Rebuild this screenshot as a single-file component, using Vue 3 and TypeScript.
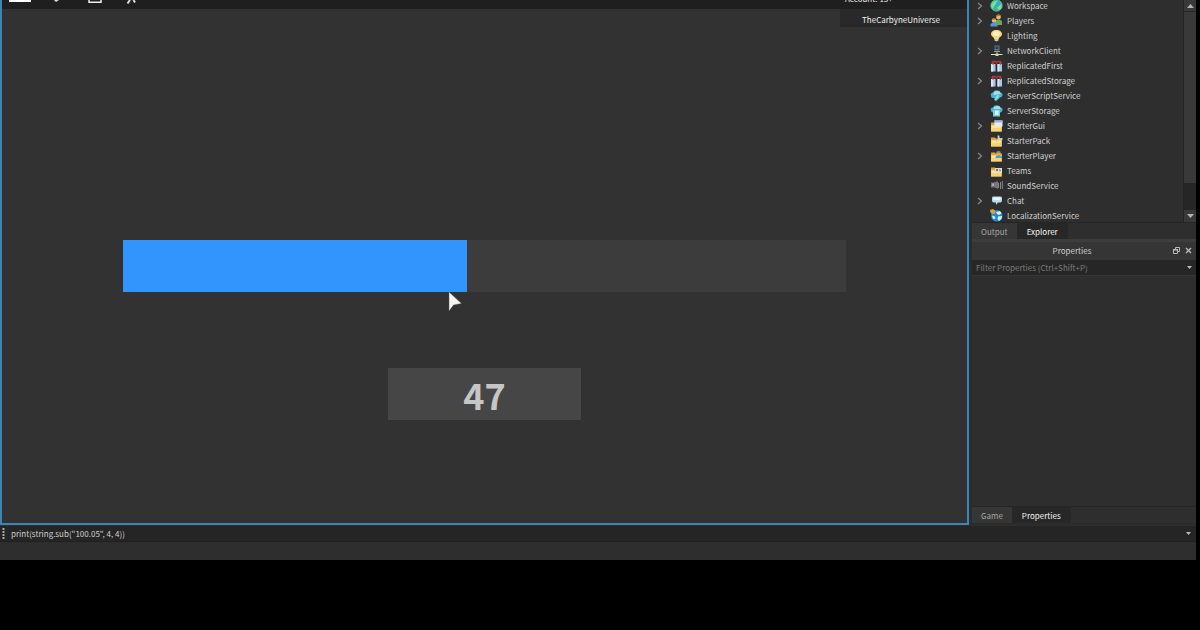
<script setup lang="ts">
import { ref } from 'vue'

interface Service {
  name: string
  icon: string
  expandable?: boolean
}

const services: Service[] = [
  { name: 'Workspace', icon: 'globe', expandable: true },
  { name: 'Players', icon: 'players', expandable: true },
  { name: 'Lighting', icon: 'bulb' },
  { name: 'NetworkClient', icon: 'network', expandable: true },
  { name: 'ReplicatedFirst', icon: 'replicated' },
  { name: 'ReplicatedStorage', icon: 'replicated', expandable: true },
  { name: 'ServerScriptService', icon: 'script' },
  { name: 'ServerStorage', icon: 'storage' },
  { name: 'StarterGui', icon: 'gui', expandable: true },
  { name: 'StarterPack', icon: 'pack' },
  { name: 'StarterPlayer', icon: 'starter', expandable: true },
  { name: 'Teams', icon: 'teams' },
  { name: 'SoundService', icon: 'sound' },
  { name: 'Chat', icon: 'chat', expandable: true },
  { name: 'LocalizationService', icon: 'locale' },
]

const progress = ref(47)
const barFill = ref(47.6)
const filter = ref('')
const command = ref('print(string.sub("100.05", 4, 4))')
</script>

<template>
  <div class="screen">
    <div class="studio">
      <div class="workspace">
        <main class="viewport">
          <header class="topbar">
            <svg class="top-icons" width="150" height="9" viewBox="0 0 150 9" aria-hidden="true">
              <path d="M7 0h22v2H7z" fill="#fff" />
              <path d="M52 0h5l-3 2z" fill="#ddd" />
              <path d="M87 0v2.300h12V0" fill="none" stroke="#eee" stroke-width="1.500" />
              <path d="M125.500 3.500L128 0M131.500 0l1.500 2.500" fill="none" stroke="#ddd" stroke-width="2" />
            </svg>
            <span class="account">Account: 13+</span>
          </header>
          <div class="player">TheCarbyneUniverse</div>
          <section class="stage">
            <div class="bar" role="progressbar" :aria-valuenow="progress" aria-valuemin="0" aria-valuemax="100">
              <div class="fill" :style="{ width: barFill + '%' }">
                <svg class="cursor" width="14" height="21" viewBox="0 0 14 21" aria-hidden="true">
                  <path d="M1 1v19l4.500-6L13.500 12.500z" fill="#f4f4f4" stroke="#555" stroke-width=".4" />
                </svg>
              </div>
            </div>
            <output class="value">{{ progress }}</output>
          </section>
        </main>

        <aside class="side">
          <section class="explorer">
            <ul class="tree">
              <li v-for="s in services" :key="s.name">
                <button v-if="s.expandable" class="expand" type="button" :aria-label="'Expand ' + s.name">
                  <svg width="6" height="8" viewBox="0 0 6 8"><path d="M1 1l3.500 3L1 7" fill="none" stroke="#8a8a8a" stroke-width="1.200" /></svg>
                </button>
                <span v-else class="expand"></span>
                <svg class="icon" width="13" height="13" viewBox="0 0 13 13" aria-hidden="true">
                  <g v-if="s.icon === 'globe'">
                    <circle cx="6.500" cy="6.500" r="5.700" fill="#35b98a" />
                    <path d="M1.500 5Q4 1 8 2L6 4 7 6 4 7 3 10Q0 8 1.500 5M9 4l2.500 1v4L9 11 7 9z" fill="#79dfa0" />
                    <path d="M6 4l3-2 2 3-3 3-3-1z" fill="#39a7ce" />
                    <circle cx="6.500" cy="6.500" r="5.700" fill="none" stroke="#68cba6" stroke-width=".7" />
                  </g>
                  <g v-else-if="s.icon === 'players'">
                    <circle cx="8.500" cy="3" r="2.400" fill="#edbc73" />
                    <path d="M5 10V7q3.500-3 7 0v4H6z" fill="#68a953" />
                    <path d="M6 2q2.500-3 5 0l-2-.3-3 1z" fill="#a66b3b" />
                    <circle cx="4" cy="6.500" r="2.200" fill="#e9b77b" />
                    <path d="M.5 12.500V10q3.500-3 7 0v2.500z" fill="#4a9cdc" />
                    <path d="M2 5.500q2-3 4 0z" fill="#94572f" />
                  </g>
                  <g v-else-if="s.icon === 'bulb'">
                    <path d="M6.500 1C3 1 .8 3 1 5.300 1.200 7.500 4 8 4.300 10h4.400C9 8 12 7.500 12 5.200 12 3 10 1 6.500 1z" fill="#ffd572" />
                    <ellipse cx="6.300" cy="4.500" rx="3.500" ry="2.600" fill="#fff1be" />
                    <path d="M4.500 10h4v1.500l-2 1-2-1z" fill="#c9c9c2" />
                  </g>
                  <g v-else-if="s.icon === 'network'">
                    <path d="M4.500 1.500h5v5h-5z" fill="#5d7680" />
                    <path d="M5.500 2.500h3V5h-3z" fill="#29424b" />
                    <path d="M4 7h6v1H4zM6.500 7h1v3h-1z" fill="#8fa0a5" />
                    <path d="M1 10.500h11.500" stroke="#ddd" />
                    <path d="M5.500 9.500h3v2.500h-3z" fill="#d2dc86" />
                  </g>
                  <g v-else-if="s.icon === 'replicated'">
                    <path d="M1 5h4.500v7.500H1zM7.500 5H12v7.500H7.500z" fill="#a9c8e6" />
                    <path d="M1 5h2v7.500H1zM7.500 5h1.700v7.500H7.500z" fill="#d8e7f5" />
                    <path d="M2.500 4V2.500h3L6.500 4l1-1.500h3V4" fill="none" stroke="#a5393c" stroke-width="1.300" />
                    <path d="M1 3.500h4L3 6zM8.500 3.500h4l-2 2.500z" fill="#b43c40" />
                  </g>
                  <g v-else-if="s.icon === 'script'">
                    <path d="M1 7Q0 4 3 3.500 4 .5 8 1.500q2 0 2.500 2 2.500.5 2 3Q12 8.500 10 8.500L6 12.500 4 10.500 5 9H3Q1 9 1 7z" fill="#4fb2cd" />
                    <path d="M3.500 4q2-3 6-1.500L11 5 4 6z" fill="#a0e0ea" />
                    <path d="M7.500 5.500l2 1.500-3.500 4-1.500-1z" fill="#8bdbe8" />
                  </g>
                  <g v-else-if="s.icon === 'storage'">
                    <path d="M1 6.500Q0 3.500 3 3.500q1-3 5-2 2 0 2.500 2 2.500 0 2 3Q12 8.500 10 8.500H3Q1 8.500 1 6.500z" fill="#4fb2cd" />
                    <path d="M3.500 4q2-3 6-1.500L11 5 4 5z" fill="#a0e0ea" />
                    <path d="M3 6h7v6.500H3z" fill="#7ccadb" />
                    <path d="M5 6.500h3.500v4.500H5z" fill="#d6f5fa" />
                  </g>
                  <g v-else-if="s.icon === 'sound'">
                    <path d="M1 3.500h3l4-1.500v8L5 8.500H1z" fill="#777" />
                    <path d="M8.500 4v5M10.500 3v7M12.300 2v8" stroke="#858585" />
                    <path d="M2 4.500h2V7H2z" fill="#aaa" />
                  </g>
                  <g v-else-if="s.icon === 'chat'">
                    <path d="M3 2.500h7.500q1.500 0 1.500 1.500v2.500Q12 8 10.500 8.500H8L6 11V8.500H4Q2 8.500 2 6.500V4q0-1.500 1-1.500z" fill="#b9daf0" />
                    <path d="M3.500 3.500h7v2.500h-7z" fill="#eaf7ff" />
                  </g>
                  <g v-else-if="s.icon === 'locale'">
                    <circle cx="6.800" cy="6.800" r="5.800" fill="#2488cb" />
                    <path d="M6 3l4-1 1.500 2.500L9 6 7 5zM8 7.500l4-.5-.5 3-2.500 2-1.500-2zM2 6.500l3 1 .5 2L3 10z" fill="#d8effa" />
                    <path d="M0 1l3-1 2.500 2L5 4.500 2 5 .5 3.500z" fill="#e39f3e" />
                  </g>
                  <g v-else>
                    <path d="M1 3.500h4l1 1h6v8H1z" fill="#dba83b" />
                    <path d="M1 6h10.500v6.500H1z" fill="#f7d371" />
                    <path d="M2 7h9v2H2z" fill="#ffe39a" />
                    <g v-if="s.icon === 'gui'">
                      <path d="M4.500 1.500h8v6h-8z" fill="#e4edf5" />
                      <path d="M4.500 1.500h8v2h-8z" fill="#8fb6df" />
                    </g>
                    <path v-else-if="s.icon === 'pack'" d="M6 8l4-4M8.500 1.500v2.500l2 1.500 2-1" fill="none" stroke="#d2d2cc" stroke-width="1.700" />
                    <g v-else-if="s.icon === 'starter'">
                      <circle cx="8.500" cy="4" r="2.200" fill="#e4a86d" />
                      <path d="M5.500 9V7.500q3-3 6.500 0V9z" fill="#4f9fce" />
                      <path d="M6.300 3.500q2.200-3 4.400 0z" fill="#965535" />
                    </g>
                    <g v-else>
                      <path d="M5 4h7v5H5z" fill="#e7e0d0" />
                      <circle cx="7" cy="6" r="1.200" fill="#987252" />
                      <path d="M9 5l2 1-1 2z" fill="#567b9c" />
                    </g>
                  </g>
                </svg>
                <span>{{ s.name }}</span>
              </li>
            </ul>
            <div class="scroll">
              <button type="button" class="scroll-up" aria-label="Scroll up"><svg width="7" height="4" viewBox="0 0 7 4"><path d="M0 4L3.500 0 7 4z" fill="#b5b5b5" /></svg></button>
              <div class="thumb"></div>
              <button type="button" class="scroll-down" aria-label="Scroll down"><svg width="7" height="4" viewBox="0 0 7 4"><path d="M0 0h7L3.500 4z" fill="#b5b5b5" /></svg></button>
            </div>
          </section>
          <nav class="tabs">
            <button type="button">Output</button>
            <button type="button" class="active">Explorer</button>
          </nav>
          <header class="dock-title">
            <h2>Properties</h2>
            <button type="button" aria-label="Float panel"><svg width="7" height="7" viewBox="0 0 7 7"><path d="M2.500 2.500v-2h4v4h-2M.5 2.500h4v4h-4z" fill="none" stroke="#bbb" /><path d="M0 2h5v1.500H0z" fill="#bbb" /></svg></button>
            <button type="button" aria-label="Close panel"><svg width="7" height="7" viewBox="0 0 7 7"><path d="M1 1l5 5M6 1L1 6" stroke="#bbb" stroke-width="1.400" /></svg></button>
          </header>
          <div class="filter">
            <input v-model="filter" type="text" aria-label="Filter Properties" placeholder="Filter Properties (Ctrl+Shift+P)" />
            <svg width="5" height="3" viewBox="0 0 5 3"><path d="M0 0h5L2.500 3z" fill="#bbb" /></svg>
          </div>
          <div class="properties"></div>
          <nav class="tabs">
            <button type="button">Game</button>
            <button type="button" class="active">Properties</button>
          </nav>
        </aside>
      </div>

      <div class="command">
        <svg class="grip" width="3" height="11" viewBox="0 0 3 11"><path d="M1.500 0v11" stroke="#aaa" stroke-width="2" stroke-dasharray="2 1" /></svg>
        <input v-model="command" type="text" aria-label="Command" />
        <svg width="5" height="3" viewBox="0 0 5 3"><path d="M0 0h5L2.500 3z" fill="#bbb" /></svg>
      </div>
      <footer class="status"></footer>
    </div>
  </div>
</template>

<style>
body {
  margin: 0;
  background: #000;
}
</style>

<style scoped>
.screen {
  box-sizing: border-box;
  display: flex;
  min-height: 100vh;
  padding: 0 4px 70px 0;
  background: #000;
  color: #d0d0d0;
  font: 8px/15px "Noto Sans CJK SC", "Open Sans", sans-serif;
}
.screen * {
  box-sizing: border-box;
}
button,
input {
  margin: 0;
  padding: 0;
  border: 0;
  background: none;
  color: inherit;
  font: inherit;
}
svg {
  display: block;
  flex: none;
}
.studio {
  display: flex;
  flex: 1;
  flex-direction: column;
  min-width: 0;
  background: #2e2e2e;
}
.workspace {
  display: flex;
  flex: 1;
}
.viewport {
  display: flex;
  flex: 1;
  flex-direction: column;
  min-width: 0;
  border: 2px solid #3b87b4;
  border-top: 0;
  background: #323232;
}
.topbar {
  display: flex;
  align-items: flex-end;
  justify-content: space-between;
  height: 9px;
  overflow: hidden;
  background: #1f1f1f;
}
.account {
  width: 122px;
  height: 15px;
  margin-bottom: 3px;
  color: #eee;
}
.player {
  align-self: flex-end;
  width: 127px;
  height: 18px;
  padding-right: 5px;
  background: #292929;
  color: #eee;
  line-height: 21px;
  text-align: center;
}
.stage {
  display: flex;
  flex-direction: column;
  align-items: center;
  gap: 76px;
  padding-top: 213px;
}
.bar {
  width: 75%;
  height: 52px;
  background: #3c3c3c;
}
.fill {
  position: relative;
  height: 100%;
  background: #3294fd;
}
.cursor {
  position: absolute;
  right: 5px;
  bottom: -20px;
}
.value {
  width: 20%;
  height: 52px;
  background: #464646;
  color: #c6c6c6;
  font-size: 36px;
  font-weight: 700;
  line-height: 52px;
  text-align: center;
}
.side {
  display: flex;
  flex: none;
  flex-direction: column;
  width: 227px;
  padding: 0 0 2px 3px;
  background: #2b2b2b;
}
.explorer {
  display: flex;
  height: 222px;
  overflow: hidden;
  background: #2e2e2e;
}
.tree {
  flex: 1;
  margin: -2px 0 0;
  padding: 0;
  list-style: none;
}
.tree li {
  display: flex;
  align-items: center;
  height: 15px;
  padding-left: 5px;
}
.expand {
  width: 13px;
}
.icon {
  margin-right: 4px;
}
.scroll {
  display: flex;
  flex-direction: column;
  width: 13px;
  border-left: 1px solid #222;
  background: #262626;
}
.scroll button {
  display: flex;
  align-items: center;
  justify-content: center;
  height: 12px;
  background: #393939;
}
.thumb {
  height: 172px;
  border-top: 1px solid #252525;
  background: #393939;
}
.scroll .scroll-up {
  height: 11px;
}
.scroll-down {
  margin-top: auto;
}
.tabs {
  display: flex;
  height: 17px;
  border-top: 1px solid #252525;
  background: #2e2e2e;
}
.tabs button {
  padding: 0 9px;
  background: #363636;
  color: #a5a5a5;
}
.tabs .active {
  padding: 0 10px;
  background: #272727;
  color: #f4f4f4;
}
.dock-title {
  display: flex;
  align-items: center;
  height: 21px;
  padding: 0 4px 1px 0;
  border-top: 3px solid #3d3d3d;
  background: #353535;
  gap: 5px;
}
.dock-title h2 {
  flex: 1;
  margin: 0;
  padding-left: 4px;
  font: inherit;
  text-align: center;
}
.filter {
  display: flex;
  align-items: center;
  height: 15px;
  padding: 0 4px;
  background: #262626;
}
.filter input {
  flex: 1;
  min-width: 0;
}
.filter input::placeholder {
  color: #7c7c7c;
  opacity: 1;
}
.properties {
  flex: 1;
  border-top: 1px solid #353535;
  background: #2e2e2e;
}
.command {
  display: flex;
  align-items: center;
  height: 17px;
  padding: 0 5px 0 2px;
  border-top: 1px solid #2e2e2e;
  border-bottom: 1px solid #1f1f1f;
  background: #252525;
}
.grip {
  margin-right: 6px;
}
.command input {
  flex: 1;
  min-width: 0;
}
.status {
  height: 18px;
  background: #2e2e2e;
}
</style>
